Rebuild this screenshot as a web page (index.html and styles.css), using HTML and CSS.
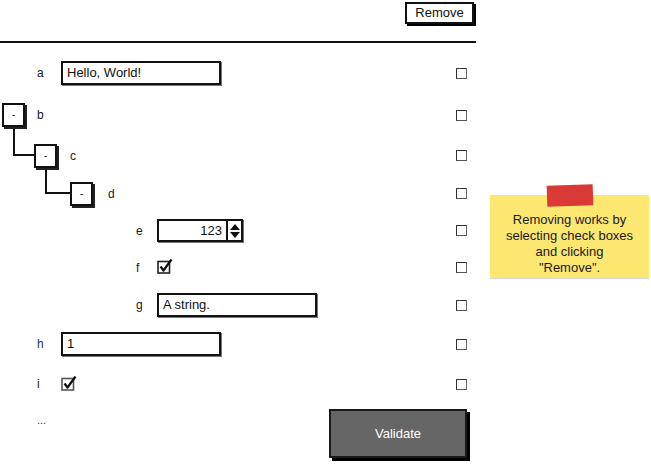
FILE: index.html
```html
<!DOCTYPE html>
<html>
<head>
<meta charset="utf-8">
<link rel="stylesheet" href="styles.css">
</head>
<body>
<div class="page">
  <main class="form">
    <header class="topbar">
      <button class="btn-remove">Remove</button>
    </header>
    <div class="rule"></div>
    <div class="rows">
      <div class="row">
        <div class="cell lvl0"><span class="lbl">a</span><div class="field w160">Hello, World!</div></div>
        <span class="cb"></span>
      </div>
      <div class="row">
        <div class="cell tree0"><span class="toggle">-</span><span class="lbl">b</span></div>
        <span class="cb"></span>
      </div>
      <div class="row">
        <div class="cell tree1"><span class="toggle link-c">-</span><span class="lbl">c</span></div>
        <span class="cb"></span>
      </div>
      <div class="row">
        <div class="cell tree2"><span class="toggle link-d">-</span><span class="lbl">d</span></div>
        <span class="cb"></span>
      </div>
      <div class="row">
        <div class="cell lvl2"><span class="lbl">e</span>
          <div class="spinner"><span class="spin-val">123</span><span class="spin-btn"><svg width="12" height="18" viewBox="0 0 12 18"><path d="M6 2 L11 8 L1 8 Z" fill="#111"/><path d="M1 10 L11 10 L6 16 Z" fill="#111"/></svg></span></div>
        </div>
        <span class="cb"></span>
      </div>
      <div class="row">
        <div class="cell lvl2"><span class="lbl">f</span>
          <svg class="check" width="16" height="16" viewBox="0 0 16 16"><rect x="1" y="3.5" width="11.5" height="11.5" fill="#fff" stroke="#222" stroke-width="1.6"/><path d="M3.5 8.5 L6.5 12.5 L14.5 1.5" fill="none" stroke="#111" stroke-width="2.2" stroke-linejoin="round"/></svg>
        </div>
        <span class="cb"></span>
      </div>
      <div class="row">
        <div class="cell lvl2"><span class="lbl">g</span><div class="field w160">A string.</div></div>
        <span class="cb"></span>
      </div>
      <div class="row">
        <div class="cell lvl0"><span class="lbl blue">h</span><div class="field w160">1</div></div>
        <span class="cb"></span>
      </div>
      <div class="row">
        <div class="cell lvl0"><span class="lbl">i</span>
          <svg class="check" width="16" height="16" viewBox="0 0 16 16"><rect x="1" y="3.5" width="11.5" height="11.5" fill="#fff" stroke="#555" stroke-width="1.6"/><path d="M3.5 8.5 L6.5 12.5 L14.5 1.5" fill="none" stroke="#111" stroke-width="2.2" stroke-linejoin="round"/></svg>
        </div>
        <span class="cb"></span>
      </div>
      <div class="row last">
        <span class="more">...</span>
        <button class="btn-validate">Validate</button>
      </div>
    </div>
  </main>
  <aside class="note">
    <span class="tape"></span>
    <p>Removing works by<br>selecting check boxes<br>and clicking<br>"Remove".</p>
  </aside>
</div>
</body>
</html>
```
FILE: styles.css
```css
* { box-sizing: border-box; }
html, body { margin: 0; padding: 0; background: #fff; }
body {
  font-family: "Liberation Sans", Arial, sans-serif;
  font-size: 12px;
  color: #1a1a1a;
}
.page { display: flex; align-items: flex-start; }
.form { width: 476px; flex: none; }
.topbar {
  height: 41px;
  display: flex;
  justify-content: flex-end;
  align-items: flex-start;
  padding: 2px 2px 0 0;
}
.btn-remove {
  font-family: inherit;
  font-size: 13px;
  color: #111;
  background: #fff;
  border: 2px solid #111;
  box-shadow: 2px 2px 0 #000;
  width: 69px;
  height: 22px;
  padding: 0;
  line-height: 18px;
}
.rule { height: 2px; background: #111; }
.rows {
  margin-top: 9px;
  display: grid;
  grid-template-rows: 42px 42px 39px 37px 37px 37px 38px 40px 40px 64px;
}
.row {
  display: grid;
  grid-template-columns: 1fr 11px;
  align-items: center;
  padding-right: 9px;
}
.cell { display: flex; align-items: center; }
.lvl0 { padding-left: 37px; }
.lvl0 .lbl { width: 24px; }
.lvl2 { padding-left: 136px; }
.lvl2 .lbl { width: 21px; }
.tree0 { padding-left: 2px; }
.tree1 { padding-left: 34px; }
.tree2 { padding-left: 70px; }
.tree0 .toggle { margin-right: 12px; }
.tree1 .toggle { margin-right: 13px; }
.tree2 .toggle { margin-right: 15px; }
.lbl { font-size: 12px; color: #1a1a1a; }
.lbl.blue { color: #1c2a6e; }
.field {
  height: 24px;
  border: 2px solid #111;
  box-shadow: 1px 1px 0 #777;
  background: #fff;
  font-size: 13px;
  line-height: 20px;
  padding-left: 4px;
  color: #111;
}
.w160 { width: 160px; }
.toggle {
  position: relative;
  width: 23px;
  height: 24px;
  border: 2px solid #111;
  box-shadow: 2px 2px 0 #222;
  background: #fff;
  font-size: 11px;
  text-align: center;
  line-height: 18px;
  flex: none;
}
.link-c::before, .link-d::before {
  content: "";
  position: absolute;
  border-left: 2px solid #111;
  border-bottom: 2px solid #111;
}
.link-c::before { left: -23px; top: -18px; width: 21px; height: 26px; }
.link-d::before { left: -27px; top: -15px; width: 25px; height: 23px; }
.spinner {
  display: flex;
  width: 86px;
  height: 23px;
  border: 2px solid #111;
  box-shadow: 1px 1px 0 #777;
}
.spin-val {
  flex: 1;
  text-align: right;
  font-size: 13px;
  line-height: 19px;
  padding-right: 4px;
  color: #111;
}
.spin-btn {
  width: 15px;
  border-left: 2px solid #111;
  display: flex;
  align-items: center;
  justify-content: center;
}
.check { display: block; margin-top: -3px; }
.cb {
  width: 11px;
  height: 11px;
  border: 1.5px solid #333;
  border-right-color: #666;
  border-bottom-color: #555;
  background: #fff;
}
.row.last {
  display: flex;
  align-items: flex-start;
  justify-content: space-between;
  padding-right: 9px;
}
.more { padding-left: 37px; padding-top: 10px; font-size: 11px; color: #333; }
.btn-validate {
  margin-top: 5px;
  width: 138px;
  height: 49px;
  background: #666;
  color: #fff;
  font-family: inherit;
  font-size: 13px;
  border: 2px solid #1a1a1a;
  box-shadow: 3px 3px 0 #000;
  padding: 0;
}
.note {
  position: relative;
  margin: 195px 0 0 14px;
  width: 159px;
  height: 83px;
  background: #fce771;
  box-shadow: 0 1px 1px rgba(0,0,0,0.15);
  padding-top: 17px;
}
.note p {
  margin: 0;
  text-align: center;
  font-size: 13px;
  line-height: 16px;
  color: #1a1a1a;
  padding: 0;
}
.tape {
  position: absolute;
  left: 57px;
  top: -10px;
  width: 46px;
  height: 21px;
  background: #d93a35;
  transform: rotate(-2deg);
}
```
